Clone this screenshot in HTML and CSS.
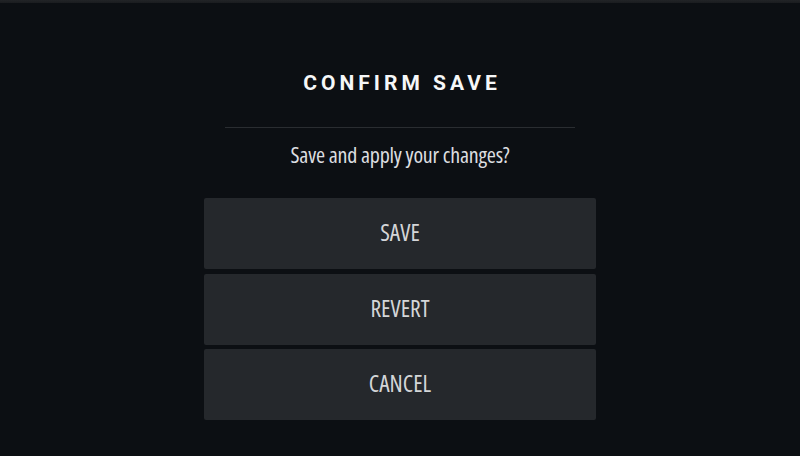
FILE: index.html
```html
<!DOCTYPE html>
<html lang="en">
<head>
<meta charset="utf-8">
<title>Confirm Save</title>
<link rel="stylesheet" href="styles.css">
</head>
<body>
<div class="topbar"></div>
<main class="dialog">
  <h1 class="title">CONFIRM SAVE</h1>
  <hr class="divider">
  <p class="message">Save and apply your changes?</p>
  <div class="actions">
    <button class="btn">SAVE</button>
    <button class="btn">REVERT</button>
    <button class="btn">CANCEL</button>
  </div>
</main>
</body>
</html>
```
FILE: styles.css
```css
html, body {
  margin: 0;
  padding: 0;
  height: 100%;
}
body {
  background: #0c0f13;
  font-family: "Open Sans", "Roboto Condensed", sans-serif;
  font-stretch: 75%;
  color: #d6d8da;
  overflow: hidden;
}
.topbar {
  height: 3px;
  background: linear-gradient(#222427, #1a1c1f);
}
.dialog {
  display: flex;
  flex-direction: column;
  align-items: center;
  padding-top: 68px;
}
.title {
  margin: 0;
  padding-left: 4px;
  font-family: "Roboto", sans-serif;
  font-stretch: normal;
  font-weight: bold;
  font-size: 21px;
  letter-spacing: 4px;
  color: #f6f7f8;
  line-height: 24px;
}
.divider {
  width: 350px;
  margin: 32px 0 0;
  border: 0;
  height: 1px;
  background: #2a2d31;
}
.message {
  margin: 12px 0 0;
  font-size: 22px;
  letter-spacing: -0.2px;
  line-height: 28px;
  color: #dcdee0;
}
.actions {
  margin-top: 30px;
  display: flex;
  flex-direction: column;
  gap: 4.5px;
  width: 392px;
}
.btn {
  height: 71px;
  border: 0;
  border-radius: 2px;
  background: #25282c;
  color: #d4d6d8;
  font-family: inherit;
  font-stretch: 75%;
  font-size: 23.5px;
  padding: 0 0 3px;
}
```
